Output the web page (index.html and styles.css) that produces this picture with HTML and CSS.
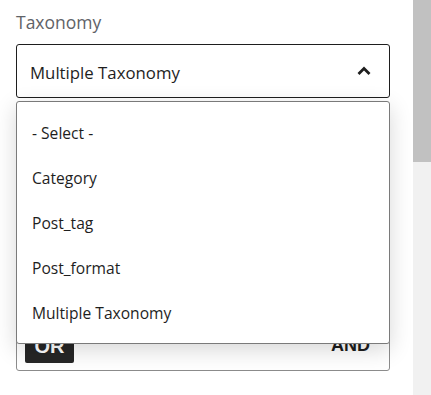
FILE: index.html
```html
<!DOCTYPE html>
<html>
<head>
<meta charset="utf-8">
<link rel="stylesheet" href="styles.css">
</head>
<body>
<div class="page">
  <main class="main">
    <div class="field">
      <div class="label">Taxonomy</div>
      <div class="select-wrap">
        <div class="select">
          <span class="select-value">Multiple Taxonomy</span>
          <svg class="chev" width="24" height="24" viewBox="0 0 24 24"><path d="M6.5 15 12 9.5l5.5 5.5" fill="none" stroke="#1e1e1e" stroke-width="2.8"/></svg>
        </div>
        <ul class="menu">
          <li>- Select -</li>
          <li>Category</li>
          <li>Post_tag</li>
          <li>Post_format</li>
          <li>Multiple Taxonomy</li>
        </ul>
      </div>
    </div>
    <div class="relation">
      <span class="btn-or">OR</span>
      <span class="btn-and">AND</span>
    </div>
  </main>
  <div class="scrollbar"><div class="thumb"></div></div>
</div>
</body>
</html>
```
FILE: styles.css
```css
html, body {
  margin: 0;
  padding: 0;
  background: #fff;
  font-family: "Open Sans", "Noto Sans", sans-serif;
  color: #1e1e1e;
}
.page {
  display: flex;
  width: 431px;
  height: 395px;
  overflow: hidden;
}
.main {
  flex: 1;
  padding: 10px 23px 0 16px;
}
.label {
  font-size: 17.5px;
  line-height: 24px;
  color: #5f6368;
  margin-bottom: 10px;
}
.select-wrap {
  position: relative;
}
.select {
  box-sizing: border-box;
  height: 54px;
  border: 1px solid #1e1e1e;
  border-radius: 3px;
  display: flex;
  align-items: center;
  justify-content: space-between;
  padding: 3px 13px 0 13px;
  font-size: 16.8px;
}
.chev {
  display: block;
  margin-top: -3px;
}
.menu {
  position: absolute;
  top: 57px;
  left: 0;
  right: 0;
  z-index: 5;
  margin: 0;
  padding: 9px 0 7px;
  list-style: none;
  background: #fff;
  border: 1px solid #7a7a7a;
  border-radius: 3px;
  box-shadow: 0 6px 22px rgba(0,0,0,0.16);
}
.menu li {
  height: 45px;
  line-height: 45px;
  padding-left: 15px;
  font-size: 15.6px;
}
.relation {
  box-sizing: border-box;
  margin-top: 228px;
  height: 45px;
  border: 1px solid #8c8c8c;
  border-radius: 3px;
  display: flex;
  align-items: flex-end;
  justify-content: space-between;
  padding: 0 19px 0 8px;
}
.btn-or {
  background: #262626;
  color: #fff;
  font-family: "Liberation Sans", Arial, sans-serif;
  font-weight: bold;
  font-size: 20px;
  width: 49px;
  height: 34px;
  line-height: 34px;
  text-align: center;
  border-radius: 2px;
  margin-bottom: 7px;
}
.btn-and {
  font-family: "Liberation Sans", Arial, sans-serif;
  font-weight: bold;
  font-size: 18px;
  line-height: 20px;
  color: #1e1e1e;
  margin-bottom: 15px;
}
.scrollbar {
  width: 18px;
  background: #f1f1f1;
  flex: none;
}
.thumb {
  height: 162px;
  background: #c1c1c1;
}
```
